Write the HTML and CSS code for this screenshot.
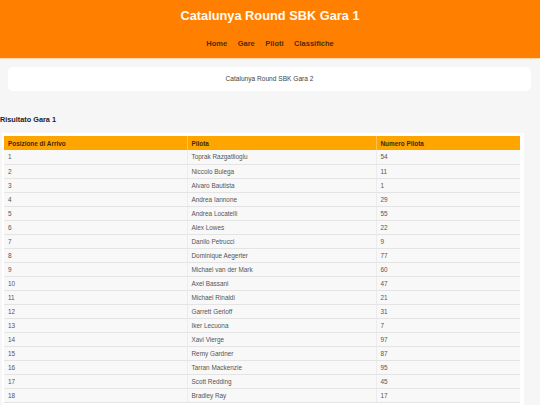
FILE: index.html
```html
<!DOCTYPE html>
<html lang="it">
<head>
<meta charset="utf-8">
<title>Catalunya Round SBK Gara 1</title>
<link rel="stylesheet" href="styles.css">
</head>
<body>
<header class="site-header">
  <h1 class="title">Catalunya Round SBK Gara 1</h1>
  <nav class="nav">
    <a href="#">Home</a>
    <a href="#">Gare</a>
    <a href="#">Piloti</a>
    <a href="#">Classifiche</a>
  </nav>
</header>
<main class="main">
  <div class="card">Catalunya Round SBK Gara 2</div>
  <h2 class="section-title">Risultato Gara 1</h2>
  <div class="table-wrap">
    <table class="results">
      <colgroup><col class="c1"><col class="c2"><col class="c3"></colgroup>
      <thead>
        <tr><th>Posizione di Arrivo</th><th>Pilota</th><th>Numero Pilota</th></tr>
      </thead>
      <tbody>
        <tr><td>1</td><td>Toprak Razgatlioglu</td><td>54</td></tr>
        <tr><td>2</td><td>Niccolo Bulega</td><td>11</td></tr>
        <tr><td>3</td><td>Alvaro Bautista</td><td>1</td></tr>
        <tr><td>4</td><td>Andrea Iannone</td><td>29</td></tr>
        <tr><td>5</td><td>Andrea Locatelli</td><td>55</td></tr>
        <tr><td>6</td><td>Alex Lowes</td><td>22</td></tr>
        <tr><td>7</td><td>Danilo Petrucci</td><td>9</td></tr>
        <tr><td>8</td><td>Dominique Aegerter</td><td>77</td></tr>
        <tr><td>9</td><td>Michael van der Mark</td><td>60</td></tr>
        <tr><td>10</td><td>Axel Bassani</td><td>47</td></tr>
        <tr><td>11</td><td>Michael Rinaldi</td><td>21</td></tr>
        <tr><td>12</td><td>Garrett Gerloff</td><td>31</td></tr>
        <tr><td>13</td><td>Iker Lecuona</td><td>7</td></tr>
        <tr><td>14</td><td>Xavi Vierge</td><td>97</td></tr>
        <tr><td>15</td><td>Remy Gardner</td><td>87</td></tr>
        <tr><td>16</td><td>Tarran Mackenzie</td><td>95</td></tr>
        <tr><td>17</td><td>Scott Redding</td><td>45</td></tr>
        <tr><td>18</td><td>Bradley Ray</td><td>17</td></tr>
      </tbody>
    </table>
  </div>
</main>
</body>
</html>
```

FILE: styles.css
```css
* { box-sizing: border-box; }

html, body {
  margin: 0;
  padding: 0;
  background: #f6f6f6;
  font-family: "Liberation Sans", Arial, sans-serif;
  color: #333;
}

.site-header {
  background: #ff8000;
  height: 59px;
  border-bottom: 1px solid #ffd9b3;
  text-align: center;
  padding-top: 7px;
}

.title {
  margin: 0;
  font-size: 12.8px;
  line-height: 17px;
  font-weight: bold;
  color: #fffaf2;
}

.nav {
  margin-top: 15px;
  display: flex;
  justify-content: center;
  gap: 10.5px;
  font-size: 7.5px;
  line-height: 10px;
  font-weight: bold;
}

.nav a {
  color: #4a2c10;
  text-decoration: none;
}

.main {
  padding-top: 8px;
}

.card {
  margin: 0 9px 0 8px;
  height: 24px;
  background: #fff;
  border-radius: 5px;
  font-size: 6.6px;
  line-height: 24px;
  text-align: center;
  color: #444;
}

.section-title {
  margin: 24px 0 8px 0;
  font-size: 7.3px;
  line-height: 10px;
  font-weight: bold;
  color: #222;
}

.table-wrap {
  margin-left: 2px;
  width: 522px;
  background: #fff;
  padding: 3px 4px 12px 2px;
}

.results {
  width: 516px;
  border-collapse: collapse;
  table-layout: fixed;
  font-size: 6.4px;
}

.results .c1 { width: 183px; }
.results .c2 { width: 189px; }
.results .c3 { width: 144px; }

.results th {
  background: #ffa500;
  color: #3a2a10;
  font-weight: bold;
  text-align: left;
  height: 14px;
  padding: 0 4px;
  border-right: 1px solid #ffc450;
}

.results th:last-child { border-right: none; }

.results td {
  height: 14px;
  padding: 0 4px;
  background: #f8f8f8;
  color: #555;
  border-bottom: 1px solid #e4e4e4;
  border-right: 1px solid #ececec;
}

.results td:last-child { border-right: none; }
```
